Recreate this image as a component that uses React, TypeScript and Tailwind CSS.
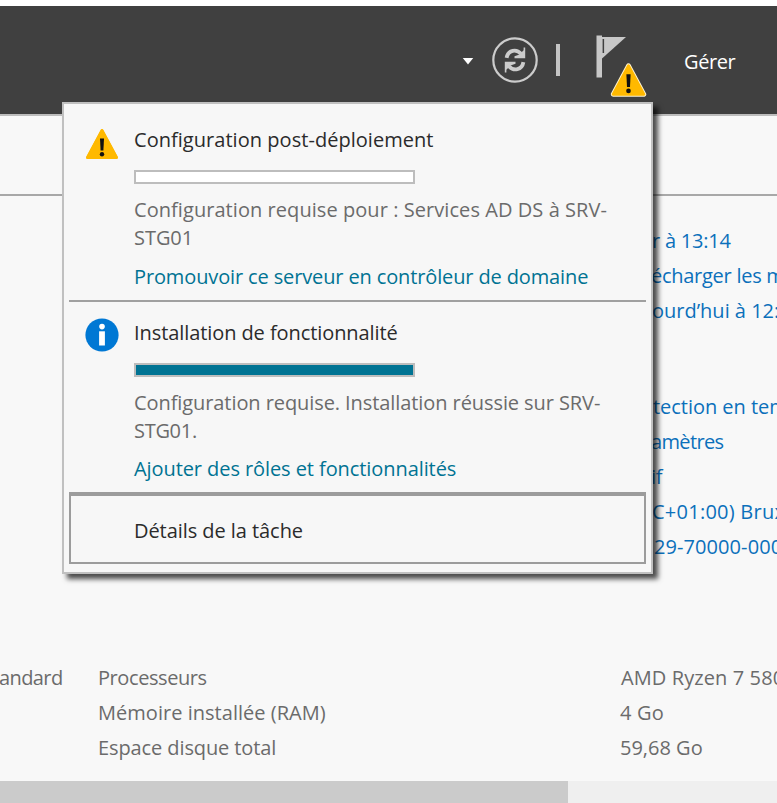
import React from "react";

function WarningIcon({ className, outlined = false }: { className: string; outlined?: boolean }) {
  return (
    <svg viewBox="0 0 34 32" className={className}>
      <path
        d="M17 2.5 L31.5 29.5 H2.5 Z"
        fill="#ffb900"
        stroke={outlined ? "#fff3d0" : "#ffb900"}
        strokeWidth={outlined ? 4.4 : 3}
        strokeLinejoin="round"
      />
      <path d="M17 2.5 L31.5 29.5 H2.5 Z" fill="#ffb900" stroke="#ffb900" strokeWidth="2.6" strokeLinejoin="round" />
      <path d="M15 10.5 H19 L18.4 22.5 H15.6 Z" fill="#111" />
      <circle cx="17" cy="26.3" r="2.2" fill="#111" />
    </svg>
  );
}

function InfoIcon() {
  return (
    <svg viewBox="0 0 34 34" className="h-[34px] w-[34px]">
      <circle cx="17" cy="17" r="16.6" fill="#0078d4" />
      <circle cx="17" cy="8.6" r="2.8" fill="#fff" />
      <path d="M14.1 13.3 H19.9 V27.5 H14.1 Z" fill="#fff" />
    </svg>
  );
}

function RefreshIcon() {
  return (
    <svg viewBox="0 0 46 46" className="h-[46px] w-[46px]">
      <circle cx="23" cy="23" r="21.7" fill="none" stroke="#cccccc" strokeWidth="2.2" />
      <g fill="none" stroke="#cccccc" strokeWidth="3.8">
        <path d="M14.6 20.8 C16 12.8 24.5 11.6 29 16.8" />
        <path d="M31.4 25.2 C30 33.2 21.5 34.4 17 29.2" />
      </g>
      <path d="M33.2 10.5 V21.2 H22.5 V19.2 L27.5 17.5 L31.6 13.2 V10.5 Z" fill="#cccccc" />
      <path d="M12.8 35.5 V24.8 H23.5 V26.8 L18.5 28.5 L14.4 32.8 V35.5 Z" fill="#cccccc" />
    </svg>
  );
}

function FlagIcon() {
  return (
    <svg viewBox="0 0 32 44" className="h-[44px] w-[32px]">
      <path d="M0.5 0.5 H6 V42.5 H0.5 Z" fill="#c8c8c8" />
      <path d="M6 2 H30 L6 23.5 Z" fill="#c8c8c8" />
      <path d="M6.6 4 H8.1 V18 H6.6 Z" fill="#404040" />
    </svg>
  );
}

function Row({ children, className = "" }: { children: React.ReactNode; className?: string }) {
  return <div className={"h-[35px] whitespace-nowrap leading-[35px] " + className}>{children}</div>;
}

export default function App() {
  return (
    <div className="relative h-[803px] w-[777px] overflow-hidden bg-[#f8f8f8] font-['Open_Sans','Noto_Sans',sans-serif] text-[20px] text-[#6b6b6b]">
      <div className="flex h-full flex-col">
        <div className="h-[6px] bg-white" />
        <header className="flex h-[108px] items-start bg-[#404040] pl-[462px] text-white">
          <svg viewBox="0 0 12 8" className="mt-[52px] h-[7px] w-[12px]">
            <path d="M0 0 H12 L6 7.5 Z" fill="#fff" />
          </svg>
          <div className="ml-[17.5px] mt-[31px]">
            <RefreshIcon />
          </div>
          <div className="ml-[18.5px] mt-[38px] h-[32px] w-[4px] bg-[#c4c4c4]" />
          <div className="relative ml-[36px] mt-[29px] h-[44px] w-[52px]">
            <FlagIcon />
            <WarningIcon outlined className="absolute left-[14px] top-[28px] h-[34px] w-[37px]" />
          </div>
          <span className="ml-[36px] mt-[42px] leading-[28px] tracking-[-0.4px]">Gérer</span>
        </header>
        <div className="h-[2px] bg-[#bdbdbd]" />
        <div className="h-[78px]" />
        <div className="h-[2px] bg-[#a8a8a8]" />
        <section className="h-[453px] pl-[651px] pt-[27px] text-[#0b70bb]">
          <Row className="pl-[1px] tracking-[-0.22px]">r à 13:14</Row>
          <Row className="tracking-[-0.27px]">écharger les m</Row>
          <Row className="pl-[1px]">ourd’hui à 12:</Row>
          <Row className="mt-[61px] pl-[2px] tracking-[-0.03px]">tection en tem</Row>
          <Row className="tracking-[-0.65px]">amètres</Row>
          <Row className="tracking-[-0.4px]">if</Row>
          <Row className="pl-[1px] tracking-[0.25px]">C+01:00) Brux</Row>
          <Row className="pl-[3px] tracking-[0.08px]">29-70000-000</Row>
        </section>
        <section className="flex h-[132px] pt-[11px]">
          <div className="w-[98px]">
            <Row className="-ml-[1px] tracking-[-0.6px]">andard</Row>
          </div>
          <div className="w-[522px]">
            <Row className="tracking-[-0.42px]">Processeurs</Row>
            <Row className="tracking-[0.03px]">Mémoire installée (RAM)</Row>
            <Row className="tracking-[-0.1px]">Espace disque total</Row>
          </div>
          <div className="w-[157px]">
            <Row className="pl-[1px] tracking-[0.1px]">AMD Ryzen 7 580</Row>
            <Row className="tracking-[0.2px]">4 Go</Row>
            <Row className="">59,68 Go</Row>
          </div>
        </section>
        <div className="h-[22px] bg-[#efefef]">
          <div className="h-full w-[568px] bg-[#cbcbcb]" />
        </div>
      </div>

      <div className="absolute left-[62px] top-[102px] h-[472px] w-[591px] border-2 border-[#c0c0c0] bg-[#f7f7f7] px-[5px] shadow-[5px_5px_5px_rgba(0,0,0,0.7)]">
        <div className="flex h-[196px] pl-[16px] pt-[22px]">
          <div className="w-[49px] pt-[2px]">
            <WarningIcon className="h-[32px] w-[34px]" />
          </div>
          <div className="whitespace-nowrap">
            <div className="leading-[28px] tracking-[0.04px] text-[#2b2b2b]">Configuration post-déploiement</div>
            <div className="mt-[16px] h-[14px] w-[281px] border-2 border-[#bdbdbd] bg-white" />
            <div className="mt-[12px] leading-[28px]">
              <div className="tracking-[0.06px]">Configuration requise pour : Services AD DS à SRV-</div>
              <div className="tracking-[-0.05px]">STG01</div>
            </div>
            <div className="mt-[11px] leading-[28px] tracking-[-0.13px] text-[#007393]">
              Promouvoir ce serveur en contrôleur de domaine
            </div>
          </div>
        </div>
        <div className="h-[2px] bg-[#a0a0a0]" />
        <div className="flex h-[190px] pl-[16px] pt-[17px]">
          <div className="-mt-[1px] w-[49px]">
            <InfoIcon />
          </div>
          <div className="whitespace-nowrap">
            <div className="leading-[28px] tracking-[-0.08px] text-[#2b2b2b]">Installation de fonctionnalité</div>
            <div className="mt-[16px] h-[14px] w-[281px] border-2 border-[#bdbdbd] bg-[#007393]" />
            <div className="mt-[12px] leading-[28px]">
              <div className="tracking-[-0.08px]">Configuration requise. Installation réussie sur SRV-</div>
              <div className="tracking-[-0.3px]">STG01.</div>
            </div>
            <div className="mt-[10px] leading-[28px] tracking-[-0.08px] text-[#007393]">
              Ajouter des rôles et fonctionnalités
            </div>
          </div>
        </div>
        <div className="h-[72px] border-2 border-t-4 border-[#9c9c9c] pl-[63px] pt-[21px] leading-[28px] tracking-[-0.06px] text-[#2b2b2b]">
          Détails de la tâche
        </div>
      </div>
    </div>
  );
}
